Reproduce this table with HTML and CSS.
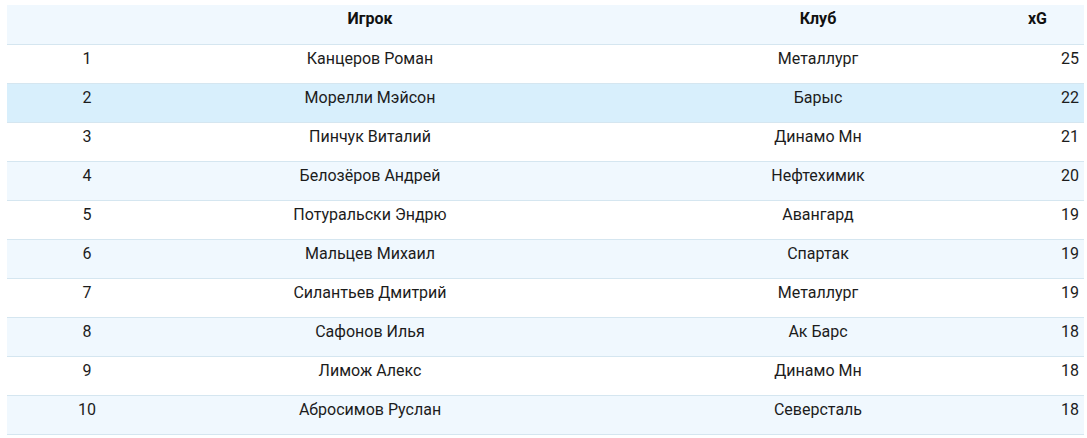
FILE: index.html
```html
<!DOCTYPE html>
<html lang="ru">
<head>
<meta charset="utf-8">
<title>xG</title>
<link rel="stylesheet" href="styles.css">
</head>
<body>
<div class="table">
  <div class="row head">
    <div class="cell rank"></div>
    <div class="cell player">Игрок</div>
    <div class="cell club">Клуб</div>
    <div class="cell xg">xG</div>
  </div>
  <div class="row"><div class="cell rank">1</div><div class="cell player">Канцеров Роман</div><div class="cell club">Металлург</div><div class="cell xg">25</div></div>
  <div class="row hover"><div class="cell rank">2</div><div class="cell player">Морелли Мэйсон</div><div class="cell club">Барыс</div><div class="cell xg">22</div></div>
  <div class="row"><div class="cell rank">3</div><div class="cell player">Пинчук Виталий</div><div class="cell club">Динамо Мн</div><div class="cell xg">21</div></div>
  <div class="row alt"><div class="cell rank">4</div><div class="cell player">Белозёров Андрей</div><div class="cell club">Нефтехимик</div><div class="cell xg">20</div></div>
  <div class="row"><div class="cell rank">5</div><div class="cell player">Потуральски Эндрю</div><div class="cell club">Авангард</div><div class="cell xg">19</div></div>
  <div class="row alt"><div class="cell rank">6</div><div class="cell player">Мальцев Михаил</div><div class="cell club">Спартак</div><div class="cell xg">19</div></div>
  <div class="row"><div class="cell rank">7</div><div class="cell player">Силантьев Дмитрий</div><div class="cell club">Металлург</div><div class="cell xg">19</div></div>
  <div class="row alt"><div class="cell rank">8</div><div class="cell player">Сафонов Илья</div><div class="cell club">Ак Барс</div><div class="cell xg">18</div></div>
  <div class="row"><div class="cell rank">9</div><div class="cell player">Лимож Алекс</div><div class="cell club">Динамо Мн</div><div class="cell xg">18</div></div>
  <div class="row alt"><div class="cell rank">10</div><div class="cell player">Абросимов Руслан</div><div class="cell club">Северсталь</div><div class="cell xg">18</div></div>
</div>
</body>
</html>
```

FILE: styles.css
```css
html, body {
  margin: 0;
  padding: 0;
  background: #ffffff;
}
body {
  padding: 5px 3px 0 7px;
  font-family: Roboto, "Liberation Sans", Arial, sans-serif;
  font-size: 16px;
  color: #1c1c1c;
}
.table {
  display: flex;
  flex-direction: column;
  width: 1077px;
}
.row {
  display: grid;
  grid-template-columns: 160px 406px 1fr 91px;
  height: 34px;
  padding-top: 4px;
  border-bottom: 1px solid #d5e6f0;
  line-height: 20px;
}
.row.head {
  height: 35px;
  background: #f0f8fe;
  font-weight: 700;
  color: #111;
}
.row.alt {
  background: #f0f8fe;
}
.row.hover {
  background: #d8effc;
}
.cell {
  white-space: nowrap;
}
.rank {
  text-align: center;
}
.player {
  text-align: center;
}
.club {
  text-align: center;
  padding-left: 70px;
}
.xg {
  text-align: right;
  padding-right: 5px;
}
.head .xg {
  padding-right: 37px;
}
```
